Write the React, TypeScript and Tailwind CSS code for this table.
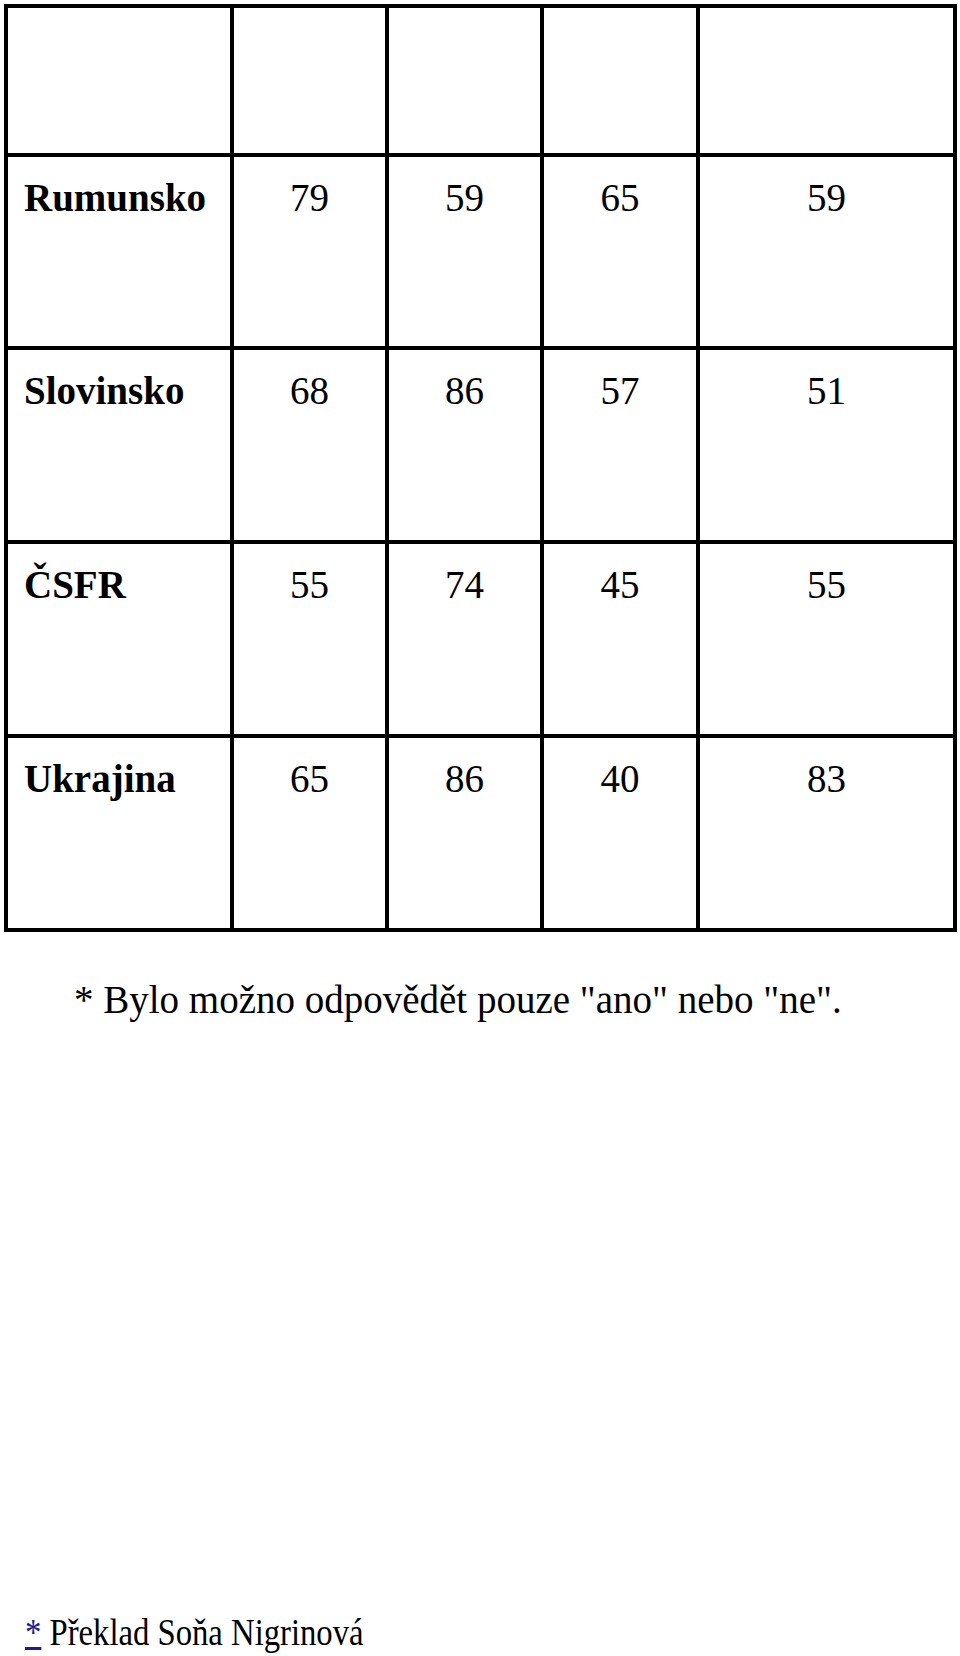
const rows = [
  { name: "Rumunsko", values: ["79", "59", "65", "59"] },
  { name: "Slovinsko", values: ["68", "86", "57", "51"] },
  { name: "ČSFR", values: ["55", "74", "45", "55"] },
  { name: "Ukrajina", values: ["65", "86", "40", "83"] },
];

const serif = "font-['Liberation_Serif','Times_New_Roman',serif]";

export default function App() {
  return (
    <div className={`bg-white text-black ${serif} min-h-[1656px] pt-[4px]`}>
      <div className="ml-[4px] w-[953px] grid grid-cols-[222px_151px_151px_152px_253px] grid-rows-[145px_189px_190px_190px_190px] gap-[4px] p-[4px] bg-black">
        {Array.from({ length: 5 }).map((_, i) => (
          <div key={i} className="bg-white" />
        ))}
        {rows.map((r) => (
          <>
            <div key={r.name} className="bg-white pl-[16px] pt-[21px] text-[39px] leading-none font-bold">
              {r.name}
            </div>
            {r.values.map((v, j) => (
              <div key={r.name + j} className="bg-white pt-[21px] text-center text-[39px] leading-none">
                {v}
              </div>
            ))}
          </>
        ))}
      </div>

      <p className="mt-[48px] pl-[74px] text-[39px] leading-none">
        * Bylo možno odpovědět pouze "ano" nebo "ne".
      </p>

      <p className="mt-[594px] pl-[25px] text-[38px] leading-none">
        <span className="inline-block origin-left scale-x-[0.86] whitespace-nowrap">
          <a className="text-[#1c1c94] underline">*</a> Překlad Soňa Nigrinová
        </span>
      </p>
    </div>
  );
}
